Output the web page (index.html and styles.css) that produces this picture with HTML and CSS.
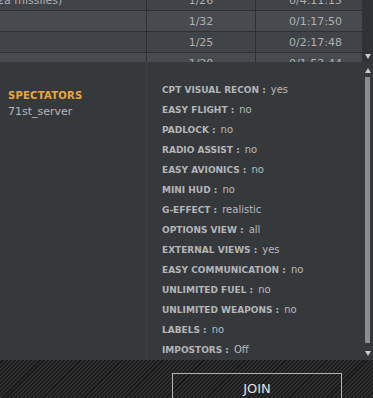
FILE: index.html
```html
<!DOCTYPE html>
<html>
<head>
<meta charset="utf-8">
<link rel="stylesheet" href="styles.css">
</head>
<body>
<div class="screen">
  <div class="top">
    <div class="table">
      <div class="rows">
        <div class="row dark"><div class="cell c1"><span class="cut">2a missiles)</span></div><div class="cell c2">1/26</div><div class="cell c3">0/4:11:15</div></div>
        <div class="row light"><div class="cell c1"></div><div class="cell c2">1/32</div><div class="cell c3">0/1:17:50</div></div>
        <div class="row dark"><div class="cell c1"></div><div class="cell c2">1/25</div><div class="cell c3">0/2:17:48</div></div>
        <div class="row light"><div class="cell c1"></div><div class="cell c2">1/20</div><div class="cell c3">0/1:52:44</div></div>
      </div>
    </div>
    <div class="scroll top-scroll"><span class="arrow down"></span></div>
  </div>
  <div class="panel">
    <div class="left">
      <div class="spec-title">SPECTATORS</div>
      <div class="spec-name">71st_server</div>
    </div>
    <div class="right">
      <div class="opt"><span class="lbl">CPT VISUAL RECON :</span><span class="val">yes</span></div>
      <div class="opt"><span class="lbl">EASY FLIGHT :</span><span class="val">no</span></div>
      <div class="opt"><span class="lbl">PADLOCK :</span><span class="val">no</span></div>
      <div class="opt"><span class="lbl">RADIO ASSIST :</span><span class="val">no</span></div>
      <div class="opt"><span class="lbl">EASY AVIONICS :</span><span class="val">no</span></div>
      <div class="opt"><span class="lbl">MINI HUD :</span><span class="val">no</span></div>
      <div class="opt"><span class="lbl">G-EFFECT :</span><span class="val">realistic</span></div>
      <div class="opt"><span class="lbl">OPTIONS VIEW :</span><span class="val">all</span></div>
      <div class="opt"><span class="lbl">EXTERNAL VIEWS :</span><span class="val">yes</span></div>
      <div class="opt"><span class="lbl">EASY COMMUNICATION :</span><span class="val">no</span></div>
      <div class="opt"><span class="lbl">UNLIMITED FUEL :</span><span class="val">no</span></div>
      <div class="opt"><span class="lbl">UNLIMITED WEAPONS :</span><span class="val">no</span></div>
      <div class="opt"><span class="lbl">LABELS :</span><span class="val">no</span></div>
      <div class="opt"><span class="lbl">IMPOSTORS :</span><span class="val">Off</span></div>
    </div>
    <div class="scroll panel-scroll">
      <span class="arrow up"></span>
      <span class="thumb"></span>
      <span class="arrow down"></span>
    </div>
  </div>
  <div class="footer">
    <button class="join">JOIN</button>
  </div>
</div>
</body>
</html>
```
FILE: styles.css
```css
html, body {
  margin: 0;
  padding: 0;
  background: #36393c;
  overflow: hidden;
}
.screen {
  width: 373px;
  height: 398px;
  display: flex;
  flex-direction: column;
  font-family: "DejaVu Sans", sans-serif;
  overflow: hidden;
}
.top {
  height: 62px;
  display: flex;
  flex: none;
}
.table {
  width: 362px;
  height: 62px;
  overflow: hidden;
}
.rows {
  margin-top: -10px;
}
.row {
  display: grid;
  grid-template-columns: 147px 109px 106px;
  height: 20px;
  border-bottom: 1px solid #2e3134;
}
.row.dark { background: #404347; }
.row.light { background: #474b4f; }
.cell {
  font-size: 11px;
  line-height: 22px;
  color: #aeb0b2;
  white-space: nowrap;
  overflow: hidden;
}
.c1, .c2 { border-right: 1px solid #2e3134; }
.c2 { text-align: center; }
.c3 { text-align: center; padding-left: 13px; }
.cut { margin-left: -3px; }
.scroll {
  width: 11px;
  flex: none;
  display: flex;
  flex-direction: column;
  align-items: center;
}
.top-scroll {
  background: #303336;
  justify-content: flex-end;
  padding-bottom: 3px;
  box-sizing: border-box;
  height: 62px;
}
.arrow {
  width: 0;
  height: 0;
  border-left: 3.5px solid transparent;
  border-right: 3.5px solid transparent;
}
.arrow.down { border-top: 5px solid #c9cbcc; }
.arrow.up { border-bottom: 5px solid #c9cbcc; }
.panel {
  flex: none;
  height: 298px;
  display: flex;
}
.left {
  width: 147px;
  border-right: 1px solid #3c3f43;
  padding: 27px 0 0 8px;
  box-sizing: border-box;
}
.spec-title {
  font-weight: bold;
  font-size: 10px;
  letter-spacing: 0.25px;
  line-height: 14px;
  color: #eaa83b;
}
.spec-name {
  font-size: 11px;
  line-height: 17px;
  color: #b5b7b9;
}
.right {
  flex: 1;
  padding: 18px 0 0 15px;
}
.opt {
  display: flex;
  align-items: baseline;
  gap: 5px;
  height: 20px;
  line-height: 20px;
  white-space: nowrap;
}
.lbl {
  font-weight: bold;
  font-size: 9px;
  color: #b3b5b7;
}
.val {
  font-size: 10px;
  color: #b9babb;
}
.panel-scroll {
  padding-top: 6px;
  box-sizing: border-box;
}
.thumb {
  display: block;
  width: 5px;
  height: 266px;
  margin: 4px 0 8px;
  background: #8b8d8f;
}
.footer {
  flex: 1;
  background: repeating-linear-gradient(135deg, #303030 0 1.4px, #1b1b1b 1.4px 2.9px);
  padding: 13px 0 0 172px;
  box-sizing: border-box;
}
.join {
  width: 170px;
  height: 32px;
  margin: 0;
  padding: 1px 0 0;
  background: transparent;
  border: 1px solid #b4b4b4;
  color: #e2e2e2;
  font-family: "DejaVu Sans", sans-serif;
  font-size: 13px;
  line-height: 28px;
  display: flex;
  justify-content: center;
  align-items: flex-start;
}
```
